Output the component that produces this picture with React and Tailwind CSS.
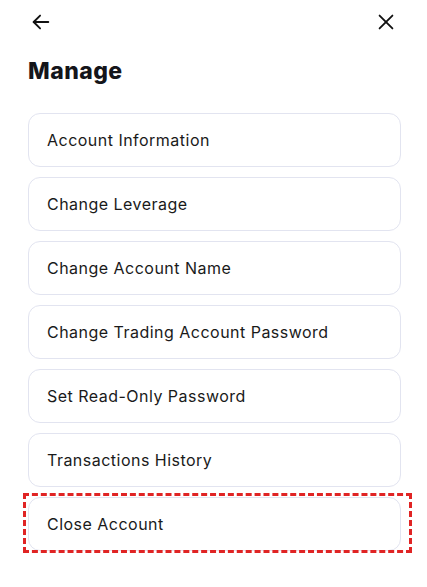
import React from 'react';

const items = [
    'Account Information',
    'Change Leverage',
    'Change Account Name',
    'Change Trading Account Password',
    'Set Read-Only Password',
    'Transactions History',
    'Close Account',
];

const ArrowLeft = () => (
    <svg width="22" height="22" viewBox="0 0 24 24" fill="none" stroke="currentColor" strokeWidth="2" strokeLinecap="round" strokeLinejoin="round">
        <path d="M20 12H4" />
        <path d="M11 5l-7 7 7 7" />
    </svg>
);

const Close = () => (
    <svg width="22" height="22" viewBox="0 0 24 24" fill="none" stroke="currentColor" strokeWidth="2" strokeLinecap="round">
        <path d="M5 5l14 14" />
        <path d="M19 5L5 19" />
    </svg>
);

export default function App() {
    return (
        <div className="w-[427px] h-[587px] bg-white text-[#111] overflow-hidden" style={{ fontFamily: 'Inter, "Noto Sans", sans-serif' }}>
            {/* Header */}
            <div className="flex items-center justify-between pl-[30px] pr-[30px] pt-[11px]">
                <ArrowLeft />
                <Close />
            </div>

            <h1 className="pl-[28px] mt-[24px] text-[23px] font-extrabold text-[#14151a] leading-[28px] tracking-[0.02em]">Manage</h1>

            <div className="mt-[28px] pl-[28px] pr-[26px] flex flex-col gap-[10px]">
                {items.map((label, i) => (
                    <div key={label} className="relative">
                        <div className="h-[54px] flex items-center px-[18px] rounded-[12px] border border-[#e2e4f0] bg-white text-[16px] text-[#1a1a1a] tracking-[0.03em]">
                            {label}
                        </div>
                        {i === items.length - 1 && (
                            <div className="absolute top-[-4px] bottom-[-2px] left-[-5px] right-[-11px] border-[3px] border-dashed border-[#e02424] pointer-events-none" />
                        )}
                    </div>
                ))}
            </div>
        </div>
    );
}
